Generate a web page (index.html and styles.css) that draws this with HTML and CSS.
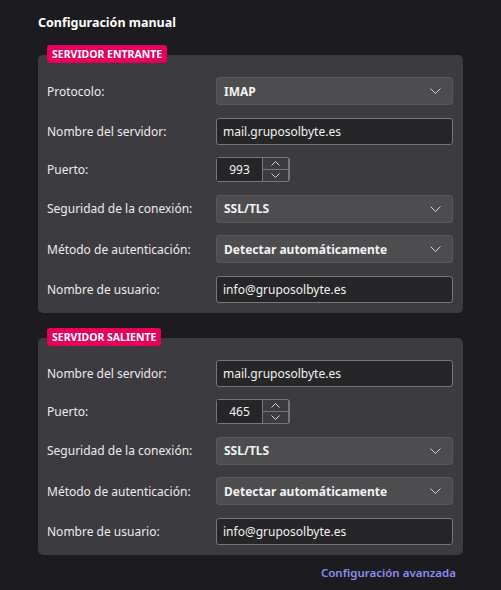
FILE: index.html
```html
<!DOCTYPE html>
<html lang="es">
<head>
    <meta charset="UTF-8">
    <meta name="viewport" content="width=device-width, initial-scale=1.0">
    <title>Configuración manual</title>
    <link rel="stylesheet" href="styles.css">
</head>
<body>
    <div class="page">
        <h1>Configuración manual</h1>

        <!-- Servidor entrante -->
        <div class="section">
            <span class="badge">Servidor entrante</span>
            <div class="card">
                <div class="row">
                    <label>Protocolo:</label>
                    <div class="select">
                        <span>IMAP</span>
                        <svg width="11" height="6" viewBox="0 0 11 6"><polyline points="0.5,0.5 5.5,5.5 10.5,0.5" /></svg>
                    </div>
                </div>
                <div class="row">
                    <label>Nombre del servidor:</label>
                    <div class="input">mail.gruposolbyte.es</div>
                </div>
                <div class="row">
                    <label>Puerto:</label>
                    <div class="spinner">
                        <div class="spinner-value">993</div>
                        <div class="spinner-buttons">
                            <div class="spin-btn"><svg width="9" height="5" viewBox="0 0 9 5"><polyline points="0.5,4.5 4.5,0.5 8.5,4.5" /></svg></div>
                            <div class="spin-btn"><svg width="9" height="5" viewBox="0 0 9 5"><polyline points="0.5,0.5 4.5,4.5 8.5,0.5" /></svg></div>
                        </div>
                    </div>
                </div>
                <div class="row">
                    <label>Seguridad de la conexión:</label>
                    <div class="select">
                        <span>SSL/TLS</span>
                        <svg width="11" height="6" viewBox="0 0 11 6"><polyline points="0.5,0.5 5.5,5.5 10.5,0.5" /></svg>
                    </div>
                </div>
                <div class="row">
                    <label>Método de autenticación:</label>
                    <div class="select">
                        <span>Detectar automáticamente</span>
                        <svg width="11" height="6" viewBox="0 0 11 6"><polyline points="0.5,0.5 5.5,5.5 10.5,0.5" /></svg>
                    </div>
                </div>
                <div class="row">
                    <label>Nombre de usuario:</label>
                    <div class="input">info@gruposolbyte.es</div>
                </div>
            </div>
        </div>

        <!-- Servidor saliente -->
        <div class="section">
            <span class="badge">Servidor saliente</span>
            <div class="card">
                <div class="row">
                    <label>Nombre del servidor:</label>
                    <div class="input">mail.gruposolbyte.es</div>
                </div>
                <div class="row">
                    <label>Puerto:</label>
                    <div class="spinner">
                        <div class="spinner-value">465</div>
                        <div class="spinner-buttons">
                            <div class="spin-btn"><svg width="9" height="5" viewBox="0 0 9 5"><polyline points="0.5,4.5 4.5,0.5 8.5,4.5" /></svg></div>
                            <div class="spin-btn"><svg width="9" height="5" viewBox="0 0 9 5"><polyline points="0.5,0.5 4.5,4.5 8.5,0.5" /></svg></div>
                        </div>
                    </div>
                </div>
                <div class="row">
                    <label>Seguridad de la conexión:</label>
                    <div class="select">
                        <span>SSL/TLS</span>
                        <svg width="11" height="6" viewBox="0 0 11 6"><polyline points="0.5,0.5 5.5,5.5 10.5,0.5" /></svg>
                    </div>
                </div>
                <div class="row">
                    <label>Método de autenticación:</label>
                    <div class="select">
                        <span>Detectar automáticamente</span>
                        <svg width="11" height="6" viewBox="0 0 11 6"><polyline points="0.5,0.5 5.5,5.5 10.5,0.5" /></svg>
                    </div>
                </div>
                <div class="row">
                    <label>Nombre de usuario:</label>
                    <div class="input">info@gruposolbyte.es</div>
                </div>
            </div>
        </div>

        <div class="footer">
            <a class="link" href="#">Configuración avanzada</a>
        </div>
    </div>
</body>
</html>
```

FILE: styles.css
```css
body {
    font-family: 'Noto Sans', 'Open Sans', sans-serif;
    margin: 0;
    padding: 0;
    background-color: #1c1b1f;
    color: #ececec;
}
.page {
    width: 425px;
    padding: 14px 38px 0 38px;
}
h1 {
    font-size: 12.5px;
    line-height: 18px;
    font-weight: 700;
    color: #fff;
    margin: 0 0 13px 0;
}
.section {
    display: flex;
    flex-direction: column;
    align-items: flex-start;
    margin-bottom: 15px;
}
.badge {
    position: relative;
    z-index: 1;
    margin: 0 0 -8px 9px;
    height: 18px;
    line-height: 18px;
    padding: 0 5px;
    background: #e6005c;
    color: #fff;
    font-size: 10.5px;
    font-weight: 700;
    text-transform: uppercase;
    border-radius: 3px;
}
.card {
    align-self: stretch;
    background: #3c3b40;
    border-radius: 5px;
    padding: 22px 10px 10px 9px;
    display: flex;
    flex-direction: column;
    gap: 12.5px;
}
.row {
    display: grid;
    grid-template-columns: 169px 237px;
    align-items: center;
}
label {
    font-size: 12px;
    color: #ececec;
}
.select {
    box-sizing: border-box;
    height: 28px;
    padding: 0 11px 0 7px;
    background: #4d4d50;
    border: 1px solid #58585c;
    border-radius: 3px;
    display: flex;
    align-items: center;
    justify-content: space-between;
    font-size: 12px;
    font-weight: 700;
    color: #f2f2f2;
}
.select svg polyline,
.spin-btn svg polyline {
    fill: none;
    stroke: #d8d8d8;
    stroke-width: 1;
}
.input {
    box-sizing: border-box;
    height: 27px;
    line-height: 25px;
    padding: 0 6px;
    background: #262528;
    border: 1px solid #77767b;
    border-radius: 3px;
    font-size: 12px;
    color: #f2f2f2;
}
.spinner {
    box-sizing: border-box;
    width: 74px;
    height: 25px;
    display: flex;
    border: 1px solid #77767b;
    border-radius: 3px;
    background: #3c3b40;
}
.spinner-value {
    width: 45px;
    background: #262528;
    border-right: 1px solid #77767b;
    text-align: center;
    line-height: 23px;
    font-size: 12px;
    color: #f2f2f2;
}
.spinner-buttons {
    width: 25px;
    display: flex;
    flex-direction: column;
    border-right: 1px solid #77767b;
}
.spin-btn {
    flex: 1;
    display: flex;
    align-items: center;
    justify-content: center;
}
.spin-btn + .spin-btn {
    border-top: 1px solid #77767b;
}
.footer {
    display: flex;
    justify-content: flex-end;
    padding-right: 7px;
    margin-top: -5px;
}
.link {
    font-size: 11.5px;
    font-weight: 600;
    color: #8e8cf2;
    text-decoration: none;
}
```
